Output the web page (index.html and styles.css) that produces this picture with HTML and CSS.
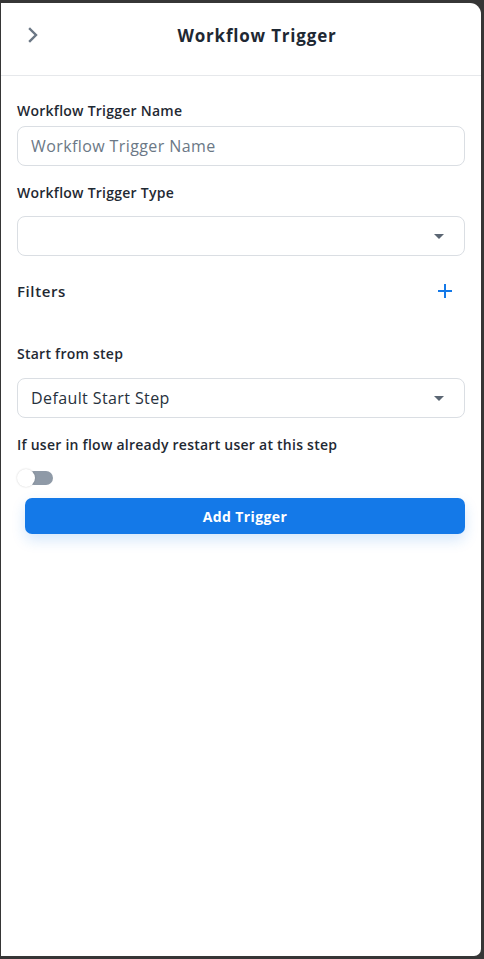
FILE: index.html
```html
<!DOCTYPE html>
<html>
<head>
<meta charset="utf-8">
<link rel="stylesheet" href="styles.css">
</head>
<body>
<div class="panel">
  <header class="header">
    <svg class="back" width="14" height="16" viewBox="0 0 14 16"><path d="M4 2 L10 8 L4 14" fill="none" stroke="#6b7785" stroke-width="2.4" stroke-linecap="square"/></svg>
    <h1 class="title">Workflow Trigger</h1>
  </header>
  <main class="content">
    <label class="label l1">Workflow Trigger Name</label>
    <div class="field input"><span class="placeholder">Workflow Trigger Name</span></div>
    <label class="label l2">Workflow Trigger Type</label>
    <div class="field select"><span class="value"></span><span class="caret"></span></div>
    <div class="filters">
      <span class="filters-title">Filters</span>
      <svg class="plus" width="16" height="16" viewBox="0 0 16 16"><path d="M8 1 V15 M1 8 H15" stroke="#1479e8" stroke-width="2"/></svg>
    </div>
    <label class="label l3">Start from step</label>
    <div class="field select"><span class="value">Default Start Step</span><span class="caret"></span></div>
    <label class="label l4">If user in flow already restart user at this step</label>
    <div class="toggle"><span class="track"></span><span class="knob"></span></div>
    <button class="btn">Add Trigger</button>
  </main>
</div>
</body>
</html>
```
FILE: styles.css
```css
* { box-sizing: border-box; }
html, body { margin: 0; padding: 0; }
body {
  background: #363636;
  width: 484px;
  height: 959px;
  overflow: hidden;
  font-family: "Open Sans", "DejaVu Sans", sans-serif;
  color: #1f2937;
}
.panel {
  margin: 3px 0 0 1px;
  width: 480px;
  height: 953px;
  background: #fff;
  border-radius: 0 11px 7px 0;
}
.header {
  height: 73px;
  border-bottom: 1px solid #e6e8eb;
  display: flex;
  align-items: center;
  position: relative;
  padding-bottom: 8px;
}
.back { position: absolute; left: 25px; top: 24px; }
.title {
  margin: 0;
  width: 100%;
  text-align: center;
  font-size: 17px;
  font-weight: 700;
  letter-spacing: 0.8px;
  color: #1e2833;
  padding-left: 32px;
}
.content { padding: 0 16px; display: flex; flex-direction: column; }
.label {
  font-size: 14px;
  font-weight: 600;
  letter-spacing: 0.25px;
  line-height: 20px;
  color: #1f2933;
}
.l1 { margin-top: 25px; margin-bottom: 5px; }
.l2 { margin-top: 17px; margin-bottom: 13px; }
.l3 { margin-top: 41px; margin-bottom: 14px; }
.l4 { margin-top: 17px; }
.field {
  height: 40px;
  border: 1px solid #dadee3;
  border-radius: 8px;
  display: flex;
  align-items: center;
  padding: 0 13px;
  font-size: 16px;
  letter-spacing: 0.4px;
}
.placeholder { color: #6b7886; }
.select { justify-content: space-between; }
.value { color: #27313c; }
.caret {
  width: 0; height: 0;
  border-left: 5px solid transparent;
  border-right: 5px solid transparent;
  border-top: 5px solid #5b6673;
  margin-right: 7px;
}
.filters {
  margin-top: 23px;
  height: 24px;
  display: flex;
  align-items: center;
  justify-content: space-between;
}
.filters-title { font-size: 15px; font-weight: 600; letter-spacing: 0.6px; color: #1f2933; }
.plus { margin-right: 12px; }
.toggle {
  position: relative;
  height: 18px;
  margin-top: 14px;
  width: 40px;
}
.track {
  position: absolute;
  left: 10px; top: 2px;
  width: 26px; height: 14px;
  border-radius: 7px;
  background: #8f9aa7;
}
.knob {
  position: absolute;
  left: 0; top: 0;
  width: 18px; height: 18px;
  border-radius: 50%;
  background: #fff;
  box-shadow: 0 0 2px rgba(0,0,0,0.2);
}
.btn {
  margin: 11px 0 0 8px;
  width: 440px;
  height: 36px;
  border: none;
  border-radius: 7px;
  background: #1479e8;
  color: #fff;
  font-family: inherit;
  font-size: 14px;
  font-weight: 700;
  letter-spacing: 0.4px;
  box-shadow: 0 6px 14px rgba(20,121,232,0.18);
}
```
